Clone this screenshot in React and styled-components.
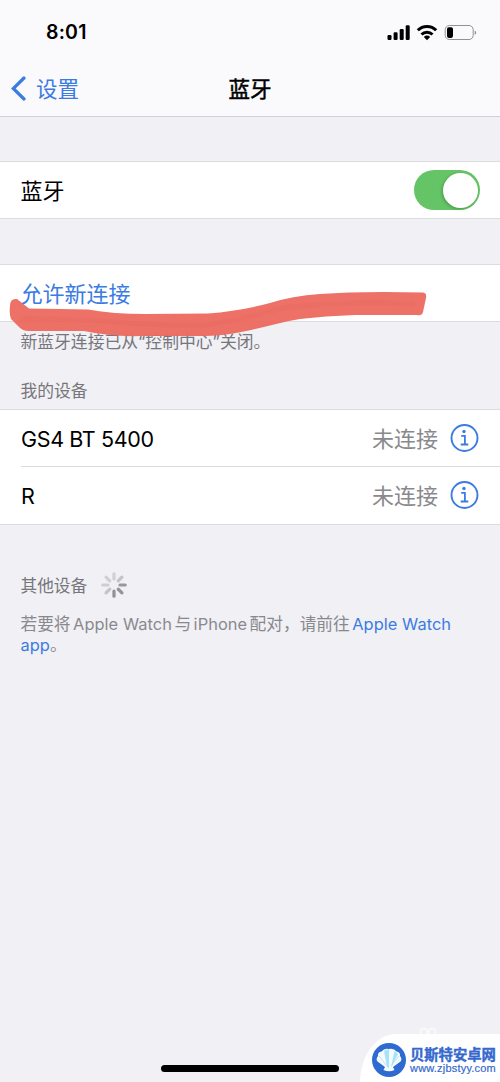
import React from "react";
import styled, { createGlobalStyle } from "styled-components";

const GlobalStyle = createGlobalStyle`
  * { box-sizing: border-box; }
  body {
    margin: 0;
    background: #f0f0f5;
    font-family: Inter, "Noto Sans CJK SC", sans-serif;
  }
`;

const Screen = styled.div`
  position: relative;
  display: flex;
  flex-direction: column;
  width: 500px;
  height: 1082px;
  overflow: hidden;
  background: #f0f0f5;
  color: #000;
`;

const Header = styled.header`
  height: 117px;
  background: #fafafc;
  border-bottom: 1px solid #d2d1d6;
`;

const StatusBar = styled.div`
  display: flex;
  justify-content: space-between;
  align-items: center;
  height: 62px;
  padding: 1px 23px 0 46px;
`;

const Clock = styled.span`
  font-size: 19.5px;
  font-weight: 600;
  letter-spacing: 0.2px;
`;

const StatusIcons = styled.svg`
  display: block;
  width: 90px;
  height: 18px;
`;

const NavBar = styled.nav`
  display: grid;
  grid-template-columns: 1fr auto 1fr;
  align-items: center;
  height: 54px;
  padding: 0 11px;
  font-size: 21.5px;
  line-height: 32px;
`;

const BackButton = styled.a`
  display: flex;
  align-items: center;
  gap: 9px;
  color: #3b7be2;
`;

const Title = styled.h1`
  margin: 0;
  font-size: 21.5px;
  font-weight: 400;
  line-height: 32px;
  -webkit-text-stroke: 0.5px #000;
`;

const Group = styled.section`
  margin-top: ${({ $gap }) => $gap}px;
  background: #fff;
  border-top: 1px solid #dcdbe0;
  border-bottom: 1px solid #dcdbe0;
`;

const Row = styled.div`
  display: flex;
  align-items: center;
  height: ${({ $height = 56 }) => $height}px;
  margin-left: 21px;
  padding-right: 21px;
  font-size: 22px;
  line-height: 32px;
  color: ${({ $link }) => ($link ? "#3b7be2" : "#000")};

  & + & {
    border-top: 1px solid #dcdbe0;
  }
`;

const Label = styled.span`
  flex: 1;
  padding-top: 2px;
  margin-left: -0.5px;
`;

const DeviceName = styled(Label)`
  padding-top: 1px;
  margin-left: 0;
  font-size: 21.5px;
  letter-spacing: -0.35px;
`;

const Status = styled.span`
  margin-right: 12px;
  padding-top: 1px;
  color: #89898d;
`;

const Switch = styled.span`
  display: flex;
  justify-content: flex-end;
  align-items: center;
  width: 66px;
  height: 40px;
  margin-right: -1px;
  padding: 2px;
  border-radius: 20px;
  background: #65c466;
`;

const Knob = styled.span`
  width: 35px;
  height: 35px;
  border-radius: 50%;
  background: #fff;
  box-shadow: -1px 1px 3px rgba(0, 60, 0, 0.3);
`;

const Note = styled.p`
  height: 24px;
  margin: ${({ $top }) => $top}px 0 0 20.5px;
  font-size: 16.8px;
  line-height: 24px;
  color: #77767b;
`;

const SearchHeading = styled.div`
  display: flex;
  align-items: center;
  gap: 14px;
  height: 28px;
  margin: 46px 0 0 20.5px;
  font-size: 16.7px;
  color: #77767b;
`;

const Help = styled.p`
  margin: 15px 0 0 20.5px;
  font-size: 16.7px;
  line-height: 21px;
  color: #89898d;
  white-space: nowrap;
`;

const Latin = styled.span`
  margin: 0 ${({ $gap = 2.5 }) => $gap}px;
  font-size: 16.4px;
  letter-spacing: 0.05px;
  color: ${({ $link }) => ($link ? "#3b7be2" : "inherit")};
`;

const Marker = styled.svg`
  position: absolute;
  left: 0;
  top: 280px;
  width: 440px;
  height: 64px;
  opacity: 0.94;
  pointer-events: none;
`;

const HomeBar = styled.div`
  position: absolute;
  left: 161px;
  bottom: 10px;
  width: 178px;
  height: 7px;
  border-radius: 4px;
  background: #000;
`;

const FaintMark = styled.svg`
  position: absolute;
  right: 62px;
  bottom: 42px;
  width: 20px;
  height: 13px;
  opacity: 0.7;
`;

const SiteBadge = styled.aside`
  position: absolute;
  right: 0;
  bottom: 0;
  display: flex;
  align-items: center;
  gap: 4px;
  width: 140px;
  height: 48px;
  padding: 3px 0 0 12px;
  border-top-left-radius: 36px 48px;
  background: #fff;
`;

const SiteText = styled.div`
  display: flex;
  flex-direction: column;
  color: #3568cd;
  white-space: nowrap;
`;

const SiteName = styled.strong`
  font-size: 14.3px;
  font-weight: 700;
  line-height: 17px;
  -webkit-text-stroke: 0.4px #3568cd;
`;

const SiteUrl = styled.span`
  font: 11px/11px "Liberation Sans", Arial, sans-serif;
  letter-spacing: 0.2px;
  -webkit-text-stroke: 0.2px #3568cd;
`;

function InfoIcon() {
  return (
    <svg width="29" height="29" viewBox="0 0 29 29" fill="none" stroke="#3b7be2">
      <circle cx="14.5" cy="14" r="13" strokeWidth="1.9" />
      <circle cx="14" cy="7.5" r="1.7" fill="#3b7be2" stroke="none" />
      <path d="M11.2 11.8h3.7v8.6M10.7 20.5h7.6" strokeWidth="1.8" />
    </svg>
  );
}

const spokes = ["#d0cfd4", "#c4c4c8", "#98989c", "#949498", "#929296", "#c4c4c8", "#cecdd2", "#d0cfd4"];

function Spinner() {
  return (
    <svg width="26" height="26" viewBox="-13 -13 26 26">
      {spokes.map((color, i) => (
        <path
          key={i}
          d="M0-6V-11.2"
          stroke={color}
          strokeWidth="3.2"
          strokeLinecap="round"
          transform={`rotate(${i * 45})`}
        />
      ))}
    </svg>
  );
}

function Device({ name, height }) {
  return (
    <Row $height={height}>
      <DeviceName>{name}</DeviceName>
      <Status>未连接</Status>
      <InfoIcon />
    </Row>
  );
}

export default function App() {
  return (
    <Screen>
      <GlobalStyle />
      <Header>
        <StatusBar>
          <Clock>8:01</Clock>
          <StatusIcons viewBox="387 22 90 18">
            <rect x="387.5" y="34" width="4" height="5" rx="1.2" />
            <rect x="393.6" y="31.2" width="4" height="7.8" rx="1.2" />
            <rect x="399.7" y="28" width="4" height="11" rx="1.2" />
            <rect x="405.7" y="24.3" width="4" height="14.7" rx="1.2" />
            <g fill="none" stroke="#000" strokeWidth="3">
              <path d="M417.8 29.3a13 13 0 0 1 18.4 0" />
              <path d="M421.5 33.5a8 8 0 0 1 11 0" />
            </g>
            <path d="M423.8 36a4.8 4.8 0 0 1 6.4 0L427 39.2z" />
            <rect x="445.2" y="24.5" width="28" height="14" rx="4.2" fill="none" stroke="#929295" />
            <rect x="447" y="26.3" width="6" height="10.6" rx="1.8" />
            <path d="M474.7 29.5c2 .8 2 3.6 0 4.4z" fill="#929295" />
          </StatusIcons>
        </StatusBar>
        <NavBar>
          <BackButton>
            <svg width="16" height="26" viewBox="0 0 16 26" fill="none" stroke="#3b7be2" strokeWidth="3.2">
              <path d="M13 2 2.3 12.5l10.7 10.5" strokeLinecap="round" strokeLinejoin="miter" />
            </svg>
            设置
          </BackButton>
          <Title>蓝牙</Title>
        </NavBar>
      </Header>

      <Group $gap={44}>
        <Row>
          <Label>蓝牙</Label>
          <Switch role="switch" aria-checked="true">
            <Knob />
          </Switch>
        </Row>
      </Group>

      <Group $gap={45}>
        <Row $link>
          <Label>允许新连接</Label>
        </Row>
      </Group>
      <Note $top={8}>新蓝牙连接已从“控制中心”关闭。</Note>
      <Note $top={25}>我的设备</Note>

      <Group $gap={6}>
        <Device name="GS4 BT 5400" />
        <Device name="R" height={58} />
      </Group>

      <SearchHeading>
        其他设备
        <Spinner />
      </SearchHeading>
      <Help>
        若要将<Latin>Apple Watch</Latin>与<Latin>iPhone</Latin>配对，请前往<Latin $link>Apple Watch</Latin>
        <br />
        <Latin $link $gap={0}>app</Latin>。
      </Help>

      <Marker viewBox="0 280 440 64">
        <path
          d="M10 306Q10 298 17 299L29 308.5Q60 309 88 309.5Q114 314 145 314L208 313.5Q240 311 270 303Q292 296 320 294Q360 291 423 292.5Q427 293 426 298L423 312Q422 316 417 315H355Q325 316 300 319C265 325 239 336 205 336H140Q112 337 84 331H28Q23 331 19 327L11 319Q9 314 10 306Z"
          fill="#ed695f"
        />
        <path
          d="M20 319Q70 319 105 321Q150 326 207 325Q245 319 282 308Q340 301 415 304"
          fill="none"
          stroke="#e45b50"
          strokeWidth="5"
          opacity="0.25"
        />
      </Marker>

      <HomeBar />
      <FaintMark viewBox="0 0 20 13" fill="none" stroke="#fff" strokeWidth="2">
        <circle cx="6" cy="5" r="3.5" />
        <circle cx="14" cy="5" r="3.5" />
      </FaintMark>
      <SiteBadge>
        <svg width="34" height="34" viewBox="0 0 34 34">
          <circle cx="17" cy="17" r="17" fill="#2f6ad2" />
          <path
            d="M13 24 5.5 18.5Q3.5 16 6 13Q5.5 9 9.5 8.5Q12 5 17 6Q22 5 24.5 8.5Q28.5 9 28 13Q30.5 16 28.5 18.5L21 24L22.5 27Q17 29.500 11.5 27Z"
            fill="#f4fbff"
          />
          <path d="M15 24 12 8l5-2V25zM19 24 22.5 8 26 11 20 23z" fill="#a9e2f5" />
          <path d="M15 23 7 13M19 23 27 13" stroke="#bfe6f5" strokeWidth="1" />
        </svg>
        <SiteText>
          <SiteName>贝斯特安卓网</SiteName>
          <SiteUrl>www.zjbstyy.com</SiteUrl>
        </SiteText>
      </SiteBadge>
    </Screen>
  );
}
